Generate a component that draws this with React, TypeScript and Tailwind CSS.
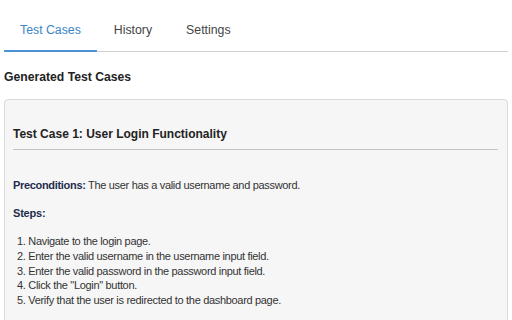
const tabs = ["Test Cases", "History", "Settings"];

const steps = [
  "Navigate to the login page.",
  "Enter the valid username in the username input field.",
  "Enter the valid password in the password input field.",
  'Click the "Login" button.',
  "Verify that the user is redirected to the dashboard page.",
];

const App = () => {
  return (
    <div className="w-[512px] h-[320px] overflow-hidden bg-white px-[4px] font-['Liberation_Sans',Arial,sans-serif] text-[#333]">
      <div className="flex border-b border-[#d0d0d0]">
        {tabs.map((tab, i) => (
          <button
            key={tab}
            className={
              i === 0
                ? "h-[52px] px-4 pt-[11px] text-[12.3px] text-[#3b86c6] border-b-[2px] border-[#4a90d6] -mb-[1px] rounded-b-[1px]"
                : "h-[51px] px-[17px] pt-[10px] text-[12.3px] text-[#444]"
            }
          >
            {tab}
          </button>
        ))}
      </div>
      <h2 className="mt-[16px] text-[12.2px] font-bold text-[#222] leading-[18px]">
        Generated Test Cases
      </h2>
      <div className="mt-[13px] h-[260px] bg-[#f6f6f6] border border-[#dadada] rounded-[4px] pl-[8px] pr-[9px] pt-[25px]">
        <h3 className="text-[12px] font-bold text-[#222] leading-[18px] pb-[6px] border-b border-[#c4c4c4]">
          Test Case 1: User Login Functionality
        </h3>
        <p className="mt-[27px] text-[11px] tracking-[-0.32px] text-[#333] leading-[16px]">
          <span className="font-bold text-[#1f2d4d]">Preconditions:</span> The user has a valid username and password.
        </p>
        <p className="mt-[12px] text-[11px] tracking-[-0.2px] font-bold text-[#1f2d4d] leading-[16px]">Steps:</p>
        <ol className="mt-[13px] pl-[4px] text-[11px] tracking-[-0.32px] text-[#333] leading-[14.8px]">
          {steps.map((s, i) => (
            <li key={i}>
              {i + 1}. {s}
            </li>
          ))}
        </ol>
      </div>
    </div>
  );
};

export default App;
